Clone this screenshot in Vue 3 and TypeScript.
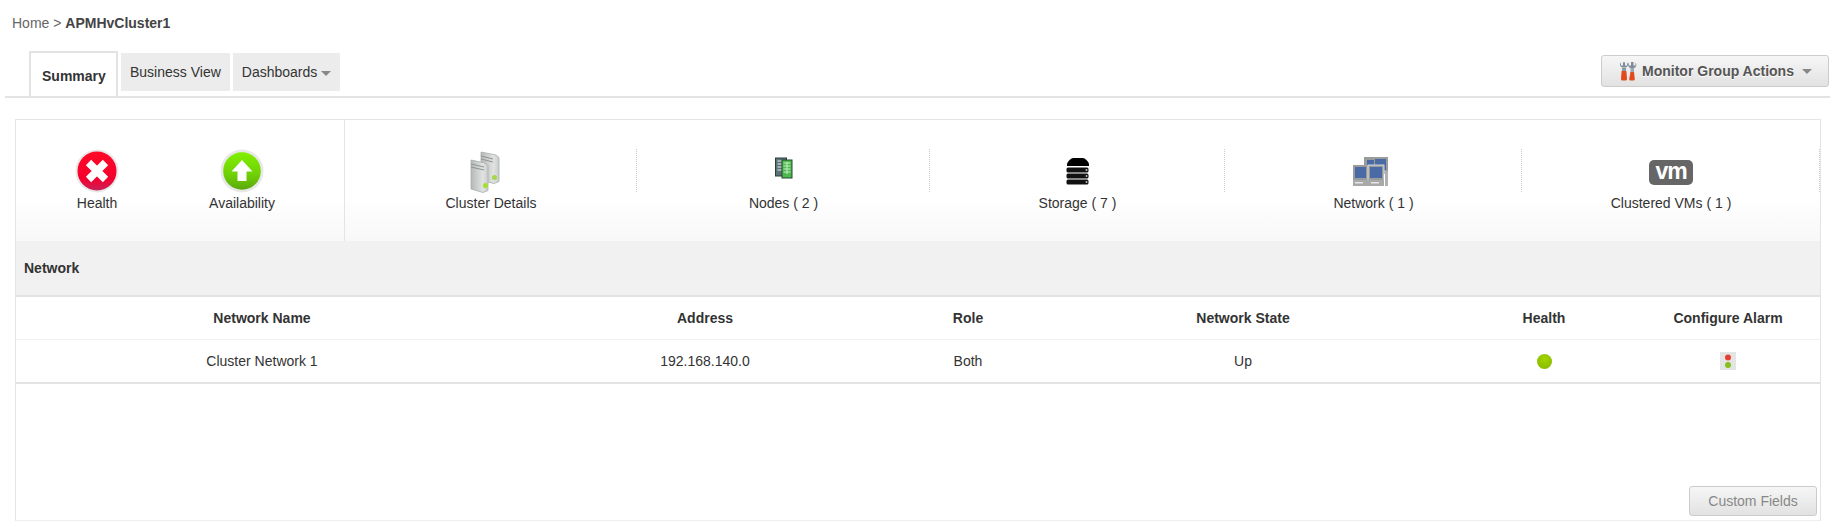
<script setup lang="ts">
const columns = ['Network Name', 'Address', 'Role', 'Network State', 'Health', 'Configure Alarm']
const cells = ['Cluster Network 1', '192.168.140.0', 'Both', 'Up']
</script>

<template>
  <div class="page">
    <div class="crumbs">Home &gt; <b>APMHvCluster1</b></div>

    <div class="tabbar">
      <div class="tabs">
        <div class="tab active">Summary</div>
        <div class="tab">Business View</div>
        <div class="tab">Dashboards<i class="caret"></i></div>
      </div>
      <button class="actions">
        <svg width="22" height="20" viewBox="0 0 22 20">
          <rect x="4" y="7" width="4" height="8" fill="#8b98a6" />
          <path d="M3 1.5a3 3 0 0 0 1 5h4a3 3 0 0 0 1-5v3H7V1.2H5v3.3H3z" fill="#7f8c99" />
          <path d="M3.6 10h4.8l.6 8a1.5 1.5 0 0 1-1.5 1.5H4.500A1.500 1.500 0 0 1 3 18z" fill="#e2491d" />
          <rect x="12.500" y="7" width="3.500" height="6" fill="#9aa7b3" />
          <path d="M11 1.500a3.400 3.400 0 0 0 1.500 5.500h3.500a3.400 3.400 0 0 0 1.500-5.500v3h-2V1h-2.500v3.500H11z" fill="#7f8c99" />
          <path d="M12.500 11h3.500l.8 7a1.500 1.500 0 0 1-1.500 1.500h-2.600a1.500 1.500 0 0 1-1.500-1.500z" fill="#e2491d" />
        </svg>
        Monitor Group Actions<i class="caret"></i>
      </button>
    </div>

    <div class="panel">
      <div class="nav">
        <div class="status">
          <div class="item">
            <svg class="icon" width="44" height="44" viewBox="0 0 44 44">
              <defs>
                <linearGradient id="red" x1="0" y1="0" x2="0" y2="1">
                  <stop offset="0" stop-color="#ff0a26" />
                  <stop offset="0.7" stop-color="#f5002c" />
                  <stop offset="1" stop-color="#c9215a" />
                </linearGradient>
              </defs>
              <circle cx="22" cy="22" r="21.500" fill="#e8e8e8" />
              <circle cx="22" cy="22" r="19.500" fill="url(#red)" />
              <path d="M22 22 13.500 13.500M22 22l8.500-8.500M22 22l-8.500 8.500M22 22l8.500 8.500" stroke="#fff" stroke-width="7.500" />
            </svg>
            <span>Health</span>
          </div>
          <div class="item">
            <svg class="icon" width="44" height="44" viewBox="0 0 44 44">
              <defs>
                <linearGradient id="green" x1="0" y1="0" x2="0" y2="1">
                  <stop offset="0" stop-color="#80f000" />
                  <stop offset="0.6" stop-color="#70d004" />
                  <stop offset="1" stop-color="#5aa80e" />
                </linearGradient>
              </defs>
              <circle cx="22" cy="22" r="21.500" fill="#e8e8e8" />
              <circle cx="22" cy="22" r="18.800" fill="url(#green)" />
              <path d="M22 11 32.500 22.500H26.500V32H17.500V22.500H11.500z" fill="#fff" />
            </svg>
            <span>Availability</span>
          </div>
        </div>

        <div class="links">
          <div class="item link">
            <svg class="icon" width="44" height="44" viewBox="0 0 44 44">
              <defs>
                <linearGradient id="srv" x1="0" y1="0" x2="1" y2="0">
                  <stop offset="0" stop-color="#b4b9b8" />
                  <stop offset="0.7" stop-color="#e0e3e1" />
                  <stop offset="1" stop-color="#c8cccb" />
                </linearGradient>
              </defs>
              <path d="M12 3l15 3 3 2.500v24l-5 2-13-3z" fill="url(#srv)" stroke="#a8adac" stroke-width=".8" />
              <path d="M12 7l12 3M12 10l12 3" stroke="#8e9493" stroke-width="1" />
              <circle cx="25.500" cy="28.500" r="2.500" fill="#a2d84a" />
              <path d="M2 11l14 3 3 2.500v25l-5 2-12-3.500z" fill="url(#srv)" stroke="#a8adac" stroke-width=".8" />
              <path d="M2 15l13 3M2 18l13 3" stroke="#8e9493" stroke-width="1" />
              <circle cx="16.500" cy="36.500" r="2.500" fill="#a2e02a" />
            </svg>
            <span>Cluster Details</span>
          </div>
          <div class="item link">
            <svg class="icon" width="44" height="44" viewBox="0 0 44 44">
              <rect x="13.500" y="9" width="11" height="18" fill="#5d7378" stroke="#2d3c40" />
              <path d="M15.500 12h7M15.500 15h7M15.500 18h7M15.500 21h7" stroke="#b8c6c8" stroke-width="1.500" />
              <rect x="20" y="11" width="10" height="18" fill="#4fb84f" stroke="#1e4a2a" />
              <path d="M21.500 14h7M21.500 17h7M21.500 20h7M21.500 23h7M25 13v12" stroke="#c4efc4" stroke-width="1" />
            </svg>
            <span>Nodes ( 2 )</span>
          </div>
          <div class="item link">
            <svg class="icon" width="44" height="44" viewBox="0 0 44 44">
              <path d="M11 15c2-5 5-6 7-6h8c2 0 5 1 7 6v2H11z" fill="#000" />
              <rect x="10.500" y="18.500" width="22" height="5" rx="1.500" fill="#111" />
              <rect x="10.500" y="24.500" width="22" height="5" rx="1.500" fill="#111" />
              <rect x="10.500" y="30.500" width="22" height="5" rx="1.500" fill="#111" />
              <circle cx="30.500" cy="21" r="1" fill="#bbb" />
              <circle cx="30.500" cy="27" r="1" fill="#bbb" />
              <circle cx="30.500" cy="33" r="1" fill="#bbb" />
            </svg>
            <span>Storage ( 7 )</span>
          </div>
          <div class="item link">
            <svg class="icon" width="44" height="44" viewBox="0 0 44 44">
              <rect x="12" y="8" width="24" height="17" fill="#9a9c9c" />
              <rect x="15" y="11" width="7" height="8" fill="#4a6aa5" />
              <rect x="23" y="10" width="11" height="11" fill="#4a6aa5" />
              <rect x="1" y="16" width="15" height="17" fill="#9a9c9c" />
              <rect x="3" y="18" width="11" height="11" fill="#4a6aa5" />
              <rect x="16" y="16" width="16" height="17" fill="#9a9c9c" stroke="#fff" stroke-width=".7" />
              <rect x="18" y="18" width="12" height="11" fill="#4a6aa5" />
              <rect x="1" y="31" width="31" height="6" fill="#a8a9a9" />
              <rect x="33" y="22" width="3" height="15" fill="#b0b1b1" />
              <rect x="3" y="33" width="8" height="1.500" fill="#e6e6e6" />
              <rect x="19" y="33" width="8" height="1.500" fill="#e6e6e6" />
            </svg>
            <span>Network ( 1 )</span>
          </div>
          <div class="item link last">
            <svg class="icon" width="44" height="44" viewBox="0 0 44 44">
              <rect x="0" y="11" width="44" height="25" rx="5" fill="#666" />
              <text x="22" y="30" text-anchor="middle" class="vm">vm</text>
            </svg>
            <span>Clustered VMs ( 1 )</span>
          </div>
        </div>
      </div>

      <div class="band">Network</div>

      <div class="table">
        <div class="row head">
          <div v-for="c in columns" :key="c" class="cell">{{ c }}</div>
        </div>
        <div class="row body">
          <div v-for="c in cells" :key="c" class="cell">{{ c }}</div>
          <div class="cell"><i class="dot"></i></div>
          <div class="cell">
            <svg width="16" height="18" viewBox="0 0 16 18">
              <rect width="16" height="18" fill="#e4e4e4" />
              <circle cx="8" cy="5.500" r="3" fill="#e8402e" />
              <circle cx="8" cy="13" r="3" fill="#86c01a" />
            </svg>
          </div>
        </div>
      </div>

      <div class="foot">
        <button class="custom">Custom Fields</button>
      </div>
    </div>
  </div>
</template>

<style>
html, body { margin: 0; background: #fff; }
</style>

<style scoped>
.page {
  width: 1841px;
  height: 530px;
  overflow: hidden;
  font-family: "Liberation Sans", Arial, sans-serif;
  font-size: 14px;
  color: #333;
  box-sizing: border-box;
}
.crumbs {
  height: 51px;
  box-sizing: border-box;
  padding: 14px 0 0 12px;
  line-height: 18px;
  color: #666;
}
.crumbs b { color: #444; }
.tabbar {
  display: flex;
  justify-content: space-between;
  align-items: flex-start;
  height: 45px;
  margin: 0 11px 0 5px;
  border-bottom: 2px solid #e3e3e3;
  box-sizing: content-box;
}
.tabs {
  display: flex;
  gap: 3px;
  padding-left: 24px;
  align-items: flex-start;
}
.tab {
  margin-top: 2px;
  height: 38px;
  line-height: 38px;
  padding: 0 9px;
  background: #ececec;
  color: #333;
}
.tab.active {
  margin-top: 0;
  height: 45px;
  line-height: 47px;
  padding: 0 11px;
  width: 89px;
  box-sizing: border-box;
  text-align: center;
  background: #fff;
  border: 2px solid #e3e3e3;
  border-bottom: 0;
  margin-bottom: -2px;
  font-weight: bold;
  position: relative;
  z-index: 1;
}
.caret {
  display: inline-block;
  margin-left: 4px;
  vertical-align: middle;
  border: 5px solid transparent;
  border-top-color: #888;
  border-bottom-width: 0;
}
.actions {
  margin: 4px 1px 0 0;
  width: 228px;
  height: 32px;
  padding: 0;
  display: flex;
  align-items: center;
  justify-content: center;
  gap: 2px;
  font: bold 14px "Liberation Sans", Arial, sans-serif;
  color: #555;
  text-shadow: 0 1px 0 #fff;
  border: 1px solid #ccc;
  border-radius: 3px;
  background: linear-gradient(#f6f6f6, #e2e2e2);
}
.actions .caret { margin-left: 6px; }
.panel {
  margin: 21px 0 0 15px;
  width: 1806px;
  height: 402px;
  box-sizing: border-box;
  border-left: 1px solid #e4e4e4;
  border-right: 1px solid #e4e4e4;
  border-bottom: 1px solid #eee;
  display: flex;
  flex-direction: column;
}
.nav {
  height: 121px;
  display: flex;
  border-top: 1px solid #e4e4e4;
  background: linear-gradient(#fff 62%, #f8f8f8);
}
.status {
  width: 329px;
  display: grid;
  grid-template-columns: 162px 128px;
  border-right: 1px solid #e4e4e4;
  box-sizing: content-box;
}
.links {
  flex: 1;
  display: grid;
  grid-template-columns: 292px 293px 295px 297px 298px;
}
.item {
  display: flex;
  flex-direction: column;
  align-items: center;
  padding-top: 29px;
  line-height: 17px;
}
.item .icon { display: block; margin-bottom: 2px; height: 44px; }
.link { position: relative; }
.link::after {
  content: "";
  position: absolute;
  right: 0;
  top: 29px;
  height: 43px;
  border-right: 1px dotted #ccc;
}
.vm {
  font: bold 23px "Liberation Sans", Arial, sans-serif;
  fill: #fff;
  letter-spacing: -1px;
}
.band {
  height: 54px;
  line-height: 54px;
  padding-left: 8px;
  background: #f1f1f1;
  font-weight: bold;
  font-size: 14px;
}
.table {
  border-top: 2px solid #e3e3e3;
  border-bottom: 2px solid #e3e3e3;
}
.row {
  display: grid;
  grid-template-columns: 492px 394px 132px 418px 184px 1fr;
  text-align: center;
}
.head {
  height: 42px;
  line-height: 42px;
  font-weight: bold;
  border-bottom: 1px solid #f1f1f1;
}
.body { height: 42px; line-height: 42px; }
.cell { display: flex; align-items: center; justify-content: center; }
.dot {
  width: 15px;
  height: 15px;
  border-radius: 50%;
  background: radial-gradient(circle at 50% 35%, #a4d400, #80b600);
}
.foot {
  flex: 1;
  display: flex;
  justify-content: flex-end;
  align-items: flex-end;
  padding: 0 3px 4px 0;
}
.custom {
  width: 128px;
  height: 30px;
  padding: 0;
  font: 14px "Liberation Sans", Arial, sans-serif;
  color: #888;
  border: 1px solid #ccc;
  border-radius: 3px;
  background: linear-gradient(#f6f6f6, #e2e2e2);
}
</style>
